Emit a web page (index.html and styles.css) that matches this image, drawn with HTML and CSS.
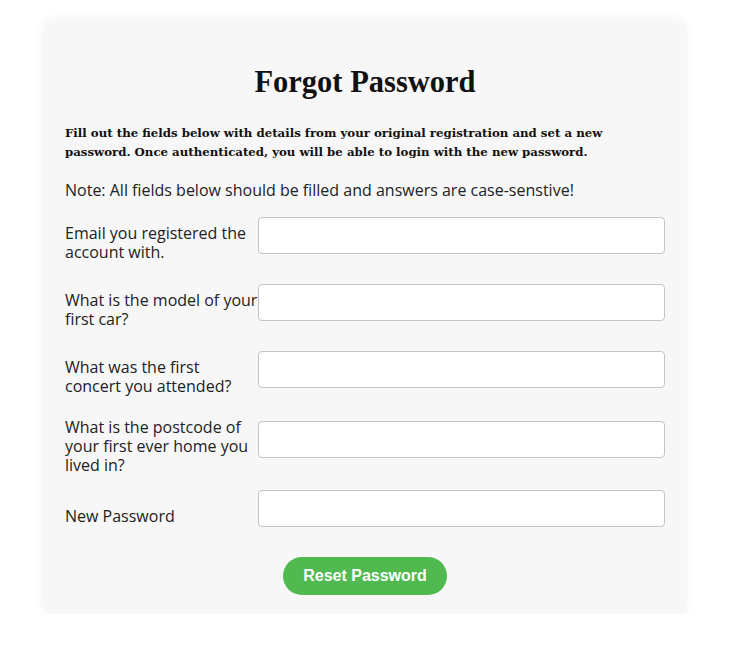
FILE: index.html
```html
<!DOCTYPE html>
<html>
<head>
<meta charset="utf-8">
<link rel="stylesheet" href="styles.css">
</head>
<body>
<div class="card">
  <h1 class="title">Forgot Password</h1>
  <p class="intro">Fill out the fields below with details from your original registration and set a new password. Once authenticated, you will be able to login with the new password.</p>
  <p class="note">Note: All fields below should be filled and answers are case-senstive!</p>
  <form class="form">
    <div class="row"><label class="label">Email you registered the account with.</label><input class="input" type="text"></div>
    <div class="row"><label class="label">What is the model of your first car?</label><input class="input" type="text"></div>
    <div class="row"><label class="label">What was the first concert you attended?</label><input class="input" type="text"></div>
    <div class="row"><label class="label">What is the postcode of your first ever home you lived in?</label><input class="input" type="text"></div>
    <div class="row"><label class="label">New Password</label><input class="input" type="password"></div>
    <div class="actions"><button class="btn" type="button">Reset Password</button></div>
  </form>
</div>
</body>
</html>
```
FILE: styles.css
```css
html, body { margin: 0; padding: 0; background: #fff; }
.card {
  width: 600px;
  margin: 21px 0 0 45px;
  padding: 0 20px 19px;
  background: #f7f7f7;
  border-radius: 6px;
  box-shadow: 0 0 12px rgba(0,0,0,0.07);
  overflow: hidden;
}
.title {
  margin: 0;
  padding-top: 44px;
  text-align: center;
  font-family: "Liberation Serif", serif;
  font-weight: bold;
  font-size: 30.5px;
  line-height: 34px;
  color: #111;
}
.intro {
  margin: 25px 0 0;
  font-family: "DejaVu Serif", serif;
  font-weight: bold;
  font-size: 11.75px;
  line-height: 19px;
  color: #111;
}
.note {
  margin: 19px 0 0;
  font-family: "Open Sans", sans-serif;
  font-size: 16px;
  line-height: 19px;
  color: #222;
}
.form { margin-top: 17px; }
.row {
  display: flex;
  align-items: center;
  margin-bottom: 15px;
}
.label {
  width: 193px;
  flex: none;
  font-family: "Open Sans", sans-serif;
  font-size: 16px;
  line-height: 19px;
  color: #222;
}
.input {
  flex: 1;
  box-sizing: border-box;
  height: 37px;
  margin: 0 0 15px;
  border: 1px solid #c4c4c4;
  border-radius: 4px;
  background: #fff;
  padding: 0 8px;
}
.actions { display: flex; justify-content: center; }
.btn {
  width: 164px;
  height: 38px;
  border: none;
  border-radius: 19px;
  background: #50b94f;
  color: #fff;
  font-family: "Liberation Sans", Arial, sans-serif;
  font-weight: bold;
  font-size: 16px;
}
```
